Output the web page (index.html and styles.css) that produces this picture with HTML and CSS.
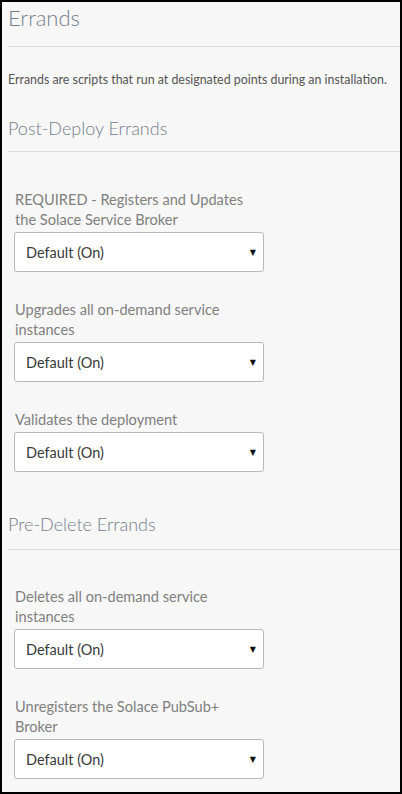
FILE: index.html
```html
<!DOCTYPE html>
<html lang="en">
<head>
<meta charset="utf-8">
<title>Errands</title>
<link rel="stylesheet" href="styles.css">
</head>
<body>
<div class="page">
  <h1 class="title">Errands</h1>
  <hr class="rule rule-title">
  <p class="desc">Errands are scripts that run at designated points during an installation.</p>

  <section class="group">
    <h2 class="section">Post-Deploy Errands</h2>
    <hr class="rule">
    <div class="fields">
      <div class="field">
        <label class="label">REQUIRED - Registers and Updates the Solace Service Broker</label>
        <div class="select"><span class="value">Default (On)</span><span class="caret">&#9660;</span></div>
      </div>
      <div class="field">
        <label class="label">Upgrades all on-demand service instances</label>
        <div class="select"><span class="value">Default (On)</span><span class="caret">&#9660;</span></div>
      </div>
      <div class="field">
        <label class="label">Validates the deployment</label>
        <div class="select"><span class="value">Default (On)</span><span class="caret">&#9660;</span></div>
      </div>
    </div>
  </section>

  <section class="group group-second">
    <h2 class="section">Pre-Delete Errands</h2>
    <hr class="rule">
    <div class="fields">
      <div class="field">
        <label class="label">Deletes all on-demand service instances</label>
        <div class="select"><span class="value">Default (On)</span><span class="caret">&#9660;</span></div>
      </div>
      <div class="field">
        <label class="label">Unregisters the Solace PubSub+ Broker</label>
        <div class="select"><span class="value">Default (On)</span><span class="caret">&#9660;</span></div>
      </div>
    </div>
  </section>
</div>
</body>
</html>
```

FILE: styles.css
```css
* { box-sizing: border-box; }

html, body {
  margin: 0;
  padding: 0;
  height: 100%;
}

body {
  font-family: Lato, "Open Sans", "Liberation Sans", sans-serif;
  background: #f7f7f7;
}

.page {
  height: 794px;
  border: 2px solid #000;
  background: #f7f7f7;
  padding: 2px 0 0 5px;
  overflow: hidden;
}

.title {
  margin: 0 0 0 1px;
  font-size: 22px;
  line-height: 28px;
  font-weight: 300;
  color: #72808e;
}

.rule {
  border: 0;
  height: 1px;
  background: #dddddd;
  margin: 0;
}

.rule-title {
  margin-top: 14px;
}

.desc {
  margin: 25px 0 0 1px;
  font-size: 12.4px;
  line-height: 16px;
  color: #555555;
}

.section {
  margin: 28px 0 11px 1px;
  font-size: 18px;
  line-height: 24px;
  font-weight: 300;
  color: #72808e;
}

.group-second .section {
  margin-top: 40px;
  margin-bottom: 13px;
}

.fields {
  display: flex;
  flex-direction: column;
  gap: 28px;
  padding: 38px 0 0 7px;
}

.group-second .fields {
  padding-top: 37px;
}

.field {
  display: flex;
  flex-direction: column;
  gap: 2px;
  width: 250px;
}

.label {
  max-width: 236px;
  font-size: 14.6px;
  line-height: 20px;
  color: #808080;
  font-weight: 400;
  padding-left: 1px;
}

.select {
  display: flex;
  align-items: center;
  justify-content: space-between;
  height: 40px;
  background: #ffffff;
  border: 1px solid #b9b9b9;
  border-radius: 3px;
  padding: 0 7px 0 11px;
}

.value {
  font-size: 14.5px;
  color: #3a3a3a;
}

.caret {
  font-size: 8px;
  color: #111111;
  font-family: "DejaVu Sans", sans-serif;
}
```
